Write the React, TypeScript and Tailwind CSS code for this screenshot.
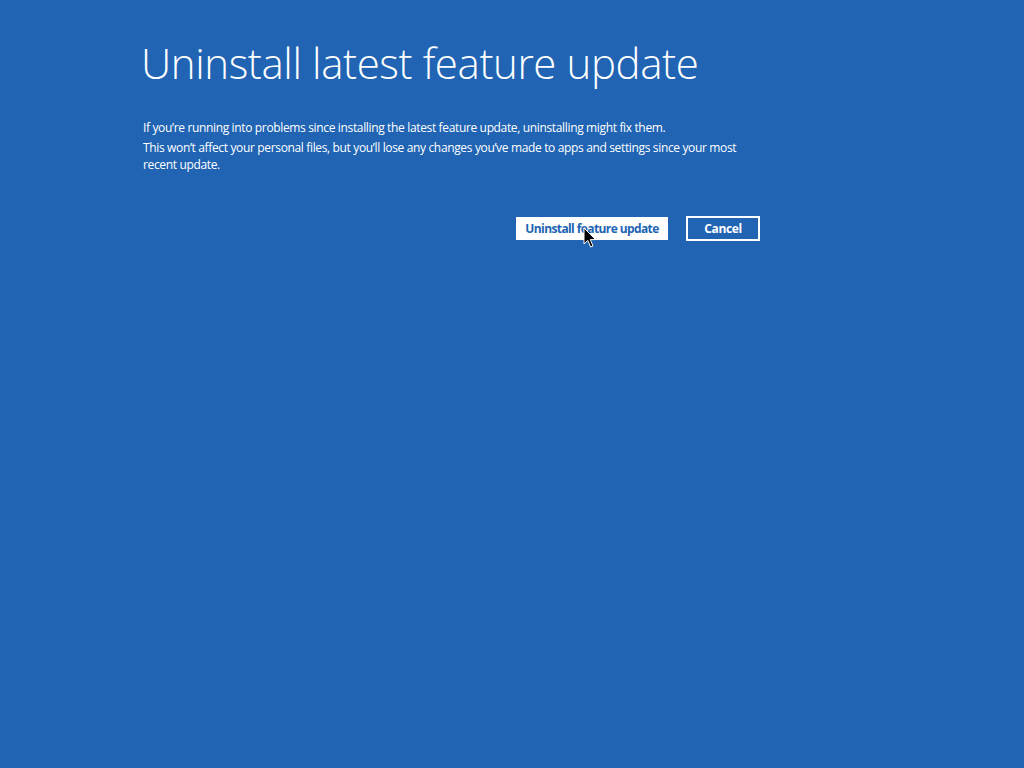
import React from "react";

function Cursor() {
  return (
    <svg
      width="14"
      height="22"
      viewBox="0 0 14 22"
      className="absolute left-[583px] top-[227px]"
    >
      <path
        d="M1 1 L1 17 L4.8 13.4 L7.6 20 L10 19 L7.3 12.6 L12.5 12.6 Z"
        fill="#000"
        stroke="#fff"
        strokeWidth="1"
        strokeLinejoin="miter"
      />
    </svg>
  );
}

export default function App() {
  return (
    <div className="relative h-[768px] w-[1024px] overflow-hidden bg-[#2064b3] font-['Open_Sans',sans-serif] text-white">
      <div className="flex w-[760px] flex-col pl-[141px] pt-[35px]">
        <h1 className="text-[42px] font-light leading-[56px] tracking-[-0.4px]">
          Uninstall latest feature update
        </h1>

        <div className="mt-[28px] flex flex-col gap-[3px] pl-[2px] text-[12px] leading-[17px] tracking-[-0.35px]">
          <p>
            If you’re running into problems since installing the latest feature update, uninstalling might fix them.
          </p>
          <p className="w-[595px]">
            This won’t affect your personal files, but you’ll lose any changes you’ve made to apps and settings since your most recent update.
          </p>
        </div>

        <div className="mt-[43px] flex justify-end gap-[18px]">
          <button className="mt-px h-[23px] w-[152px] bg-white text-[12px] font-bold tracking-[-0.6px] text-[#2064b3]">
            Uninstall feature update
          </button>
          <button className="h-[25px] w-[74px] border-2 border-white text-[12px] font-bold tracking-[-0.4px]">
            Cancel
          </button>
        </div>
      </div>
      <Cursor />
    </div>
  );
}
